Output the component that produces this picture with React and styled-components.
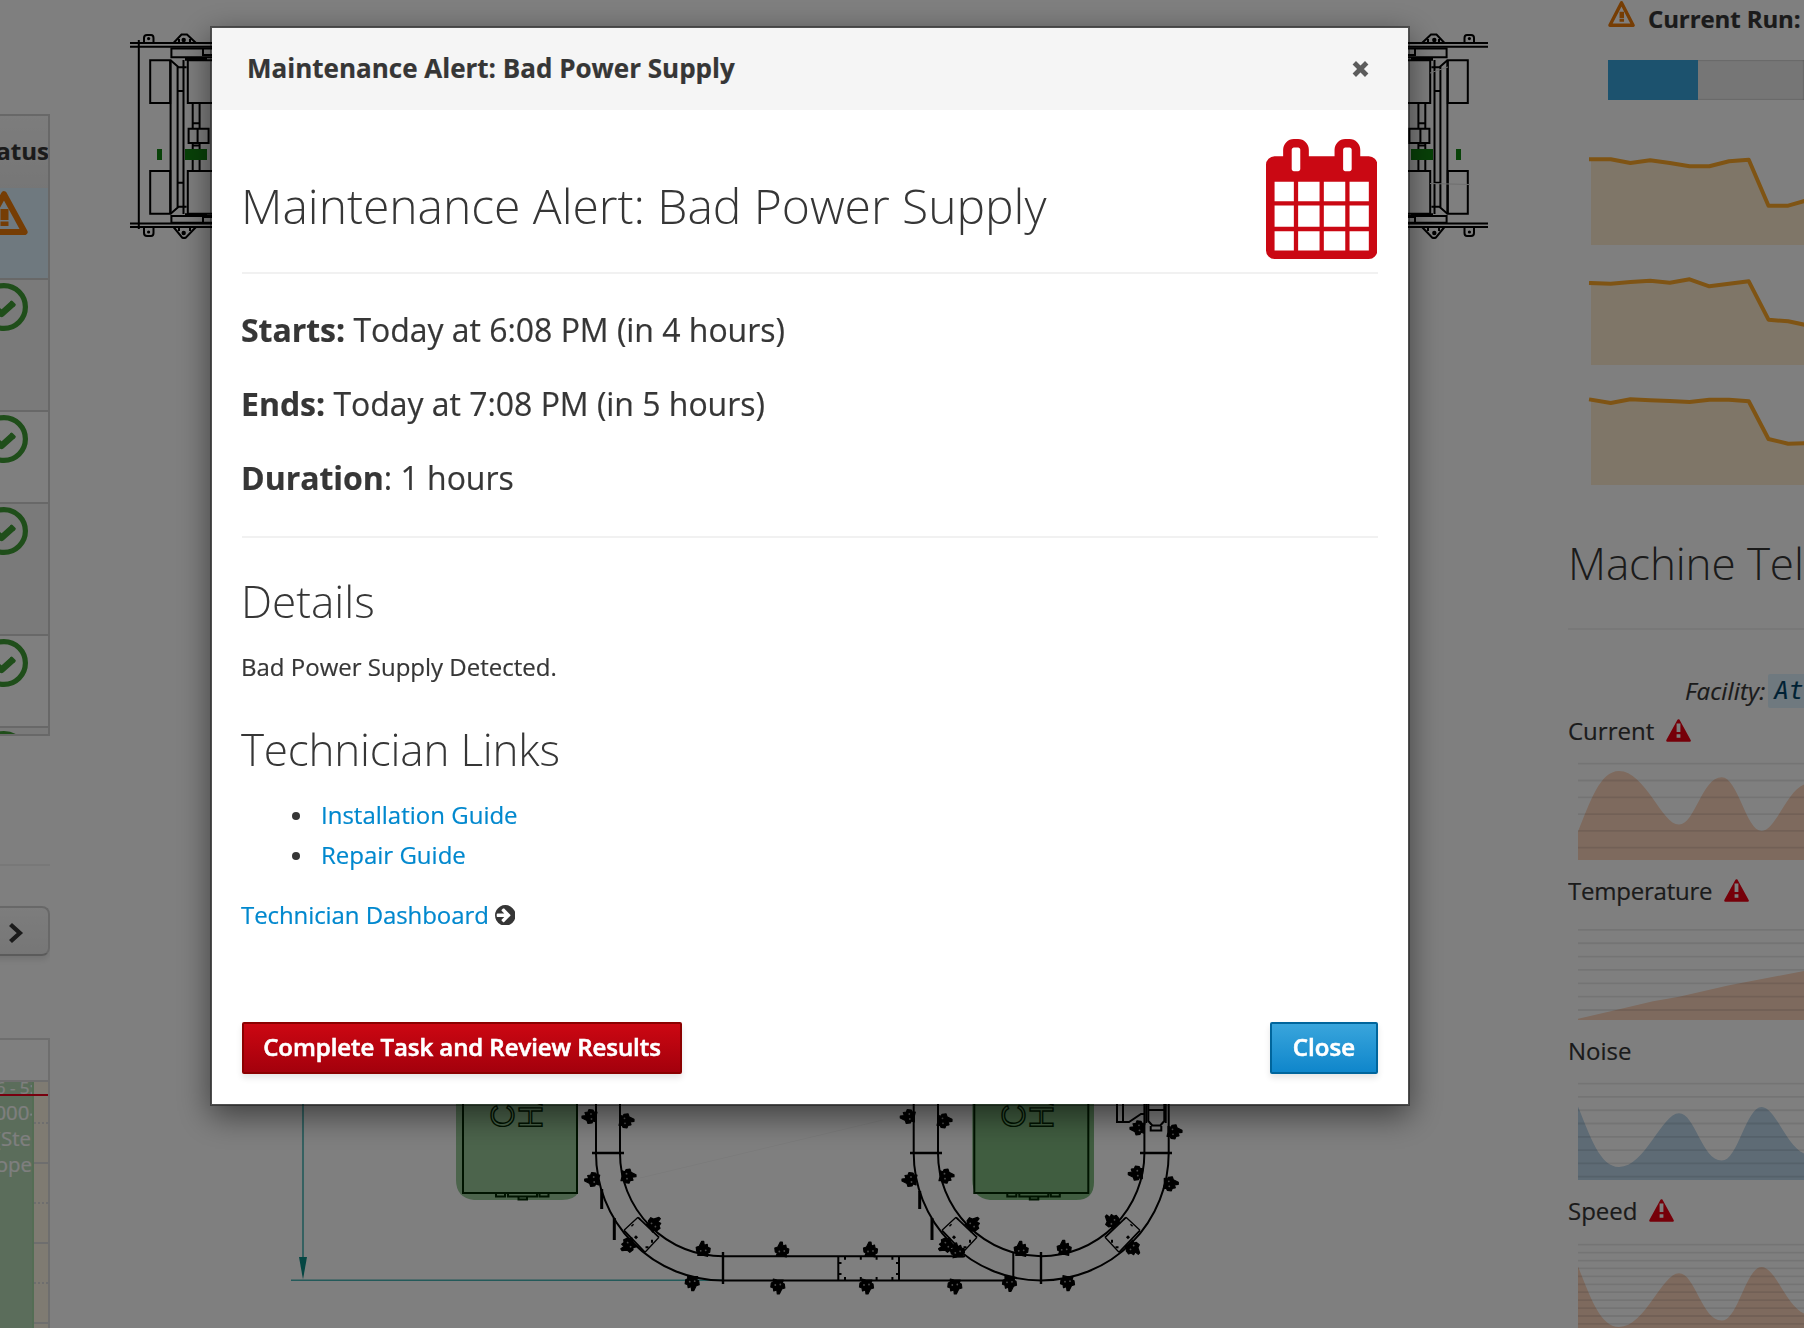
import React from "react";
import styled, { createGlobalStyle, css } from "styled-components";

const Global = createGlobalStyle`
  * { box-sizing: border-box; }
  html, body { margin: 0; height: 100%; overflow: hidden; background: #fff; }
  body {
    font-family: "Open Sans", "Noto Sans", sans-serif;
    font-size: 24px;
    line-height: 40px;
    color: #363636;
    -webkit-text-stroke: 0.2px;
  }
`;

/* ---------- page shell ---------- */

const Page = styled.main`
  display: grid;
  grid-template-columns: 50px minmax(0, 1fr) 236px;
  width: 100vw;
  height: 100vh;
  overflow: hidden;
`;

const LeftRail = styled.aside`
  display: flex;
  flex-direction: column;
  overflow: hidden;
  padding-top: 114px;
`;

const RightRail = styled.aside`
  overflow: hidden;
  white-space: nowrap;
`;

const FloorPlan = styled.section`
  overflow: hidden;
  svg { display: block; }
`;

/* ---------- left rail ---------- */

const StatusTable = styled.div`
  height: 622px;
  overflow: hidden;
  border: solid #d1d1d1;
  border-width: 2px 2px 2px 0;
`;

const StatusHead = styled.div`
  display: flex;
  justify-content: flex-end;
  height: 72px;
  padding-top: 15px;
  background: linear-gradient(#fafafa, #ededed);
  font-weight: 700;
  span { margin-right: -1px; }
`;

const StatusRow = styled.div`
  display: flex;
  justify-content: flex-end;
  height: ${(p) => p.$height}px;
  padding: 3px 20px 0 0;
  border-bottom: 2px solid #d1d1d1;
  background: ${(p) => (p.$tone === "selected" ? "#def3ff" : p.$tone === "odd" ? "#f5f5f5" : "#fff")};
  svg { flex: none; }
`;

const Rule = styled.hr`
  width: 100%;
  height: 2px;
  margin: ${(p) => p.$margin || "0"};
  border: 0;
  background: #f1f1f1;
`;

const PagerButton = styled.button`
  display: flex;
  flex: none;
  align-items: center;
  justify-content: flex-end;
  width: 90px;
  height: 50px;
  margin: 40px 0 0 -40px;
  padding: 3px 24px 0 0;
  border: 2px solid #d1d1d1;
  border-bottom-color: #b7b7b7;
  border-radius: 8px;
  background: linear-gradient(#fafafa, #ededed);
  box-shadow: 0 4px 6px rgba(3, 3, 3, 0.1);
`;

const Schedule = styled.div`
  flex: 1;
  margin-top: 82px;
  border: solid #ddd;
  border-width: 2px 2px 0 0;
  overflow: hidden;
`;

const ScheduleHead = styled.div`
  height: 42px;
  border-bottom: 2px solid #ddd;
`;

const ScheduleBody = styled.div`
  position: relative;
  height: 260px;
  display: flex;
`;

const ScheduleEvent = styled.div`
  width: 34px;
  overflow: hidden;
  border-right: 2px solid #a8dba8;
  background: #b6dbb6;
  color: #fff;
  font-size: 20.4px;
  line-height: 26px;
  white-space: nowrap;
`;

const EventLine = styled.div`
  display: flex;
  justify-content: flex-end;
  width: ${(p) => p.$width || 30}px;
  ${(p) =>
    p.$small &&
    css`
      height: 17px;
      font-size: 17px;
      line-height: 12px;
    `}
`;

const SlotColumn = styled.div`
  flex: 1;
  background: #fff6e4;
`;

const Slot = styled.div`
  height: 40px;
  border-bottom: 2px ${(p) => (p.$minor ? "dotted" : "solid")} #ddd;
  &:first-child { height: 42px; }
`;

const NowLine = styled.div`
  position: absolute;
  top: 12px;
  left: 0;
  right: 0;
  height: 2px;
  background: #f0001c;
`;

/* ---------- right rail ---------- */

const RunHeading = styled.div`
  display: flex;
  align-items: flex-start;
  gap: 13px;
  height: 60px;
  padding: 0 0 0 40px;
  font-weight: 700;
  line-height: 37px;
  letter-spacing: -0.1px;
  svg { flex: none; margin-top: 1px; }
`;

const Progress = styled.div`
  height: 40px;
  margin-left: 40px;
  background: #ededed;
  box-shadow: inset 0 0 2px rgba(0, 0, 0, 0.4);
`;

const ProgressFill = styled.div`
  width: 90px;
  height: 100%;
  background: #39a5dc;
`;

const Sparklines = styled.div`
  display: flex;
  flex-direction: column;
  margin: 25px 0 0 18px;
  svg { display: block; }
`;

const SectionTitle = styled.h2`
  margin: 48px 0 35px;
  font-size: 44px;
  font-weight: 300;
  line-height: 60px;
  letter-spacing: -0.1px;
  -webkit-text-stroke: 0;
`;

const Facility = styled.div`
  display: flex;
  align-items: flex-start;
  gap: 3px;
  height: 40px;
  padding-left: 117px;
  font-style: italic;
  line-height: 34px;
  letter-spacing: 0.15px;
`;

const FacilityCode = styled.code`
  flex: none;
  height: 34px;
  width: 120px;
  padding-left: 6px;
  border-radius: 2px;
  background: #def3ff;
  color: #004368;
  font: italic 24px/34px "DejaVu Sans Mono", monospace;
`;

const Metric = styled.div`
  height: 160px;
`;

const MetricLabel = styled.div`
  display: flex;
  align-items: flex-start;
  gap: 12px;
  height: 34px;
  line-height: 34px;
  letter-spacing: ${(p) => p.$tracking || 0}px;
  svg { margin-top: 5px; }
`;

const MetricChart = styled.svg`
  display: block;
  margin-left: 10px;
`;

/* ---------- modal ---------- */

const Backdrop = styled.div`
  position: fixed;
  inset: 0;
  display: flex;
  align-items: flex-start;
  padding: 26px 0 0 210px;
  background: rgba(0, 0, 0, 0.5);
`;

const Dialog = styled.div`
  display: flex;
  flex-direction: column;
  width: 1200px;
  height: 1080px;
  border: 2px solid rgba(0, 0, 0, 0.38);
  background: #fff;
  background-clip: padding-box;
  box-shadow: 0 10px 30px rgba(0, 0, 0, 0.5);
`;

const DialogHeader = styled.header`
  display: flex;
  align-items: center;
  justify-content: space-between;
  height: 82px;
  padding: 0 39px 0 35px;
  background: #f5f5f5;
`;

const DialogTitle = styled.h4`
  margin: -2px 0 0;
  font-size: 26px;
  font-weight: 700;
`;

const DialogBody = styled.div`
  display: flex;
  flex: 1;
  flex-direction: column;
  padding: 28px 30px 30px;
`;

/* Copy hangs one pixel outside the rules so the glyph edges line up with them. */
const hang = css`
  margin-left: -1px;
`;

const TitleRow = styled.div`
  display: flex;
  align-items: flex-start;
  justify-content: space-between;
  height: 134px;
  padding-right: 1px;
  svg { margin-top: 1px; }
`;

const Heading = styled.h1`
  margin: ${(p) => p.$margin};
  font-size: ${(p) => p.$size}px;
  font-weight: 300;
  line-height: 60px;
  letter-spacing: ${(p) => p.$tracking || 0}px;
  -webkit-text-stroke: 0;
  ${hang}
`;

const Facts = styled.div`
  display: flex;
  flex-direction: column;
  gap: 30px;
  margin: 34px 0 36px;
  font-size: 32px;
  line-height: 44px;
  letter-spacing: -0.03px;
  ${hang}
`;

const Fact = styled.p`
  margin: 0;
  b { font-weight: 700; }
`;

const Paragraph = styled.p`
  display: flex;
  align-items: center;
  gap: 6px;
  margin: ${(p) => p.$margin};
  letter-spacing: ${(p) => p.$tracking || 0}px;
  ${hang}
`;

const LinkList = styled.ul`
  margin: 0;
  padding: 0 0 0 50px;
  list-style: none;
`;

const LinkItem = styled.li`
  display: flex;
  align-items: center;
  gap: 21px;
  &::before {
    content: "";
    width: 8px;
    height: 8px;
    margin-top: 1px;
    border-radius: 50%;
    background: #363636;
  }
`;

const Link = styled.a`
  color: #0088ce;
  text-decoration: none;
`;

const Actions = styled.div`
  display: flex;
  justify-content: space-between;
  margin-top: auto;
`;

const Button = styled.button`
  width: ${(p) => p.$width}px;
  height: 52px;
  padding: 0 0 2px;
  border: 2px solid ${(p) => (p.$danger ? "#8b0000" : "#00659c")};
  border-radius: 2px;
  background: ${(p) => (p.$danger ? "linear-gradient(#cc0712, #a3000c)" : "linear-gradient(#39a5dc, #0f86cb)")};
  box-shadow: 0 4px 6px rgba(3, 3, 3, 0.1);
  color: #fff;
  font: 600 24px/40px "Open Sans", sans-serif;
  letter-spacing: ${(p) => (p.$danger ? -0.06 : 0.1)}px;
  -webkit-text-stroke: 0.6px #fff;
  white-space: nowrap;
`;

/* ---------- icons ---------- */

const OkIcon = () => (
  <svg width="48" height="48" viewBox="0 0 48 48" fill="none" stroke="#3f9c35">
    <circle cx="24" cy="24" r="21.4" strokeWidth="5.2" />
    <path d="M14.5 24.500l7 6.300L33 20.500" strokeWidth="6.600" strokeLinejoin="round" />
    <path d="M31.500 19.200l2.800 2.600" strokeWidth="3" strokeLinecap="round" />
  </svg>
);

const WarningIcon = ({ width, height }) => (
  <svg width={width} height={height} viewBox="0 0 48 44" preserveAspectRatio="none">
    <path d="M24 3.2L44.6 41H3.4z" fill="none" stroke="#ec7a08" strokeWidth="6" strokeLinejoin="round" />
    <path d="M20.500 18h8v11h-8zM20.500 30.500h8v4.500h-8z" fill="#ec7a08" />
  </svg>
);

const ErrorIcon = () => (
  <svg width="25" height="23" viewBox="0 0 25 23">
    <path d="M12.5 1.4L23.6 21.6H1.4z" fill="#ec0013" stroke="#ec0013" strokeWidth="2.4" strokeLinejoin="round" />
    <path d="M10.6 4.6h3.8v8.4h-3.8zM10.6 15.2h3.8v3.6h-3.8z" fill="#fff" />
  </svg>
);

const ChevronIcon = () => (
  <svg width="16" height="22" viewBox="0 0 16 22">
    <path d="M2.5 2.5L11.8 11l-9.3 8.5" fill="none" stroke="#363636" strokeWidth="4.4" />
  </svg>
);

const CloseIcon = () => (
  <svg width="17" height="17" viewBox="0 0 17 17">
    <path d="M2.3 1.8l12.4 12.4M14.7 1.8L2.3 14.2" stroke="#5c5c5c" strokeWidth="4.8" />
  </svg>
);

const CalendarIcon = () => (
  <svg width="111.4" height="120" viewBox="0 0 1664 1792">
    <path
      fill="#ca0813"
      d="M128 1664h288v-288h-288v288zm352 0h320v-288h-320v288zm-352-352h288v-320h-288v320zm352 0h320v-320h-320v320zm-352-384h288v-288h-288v288zm736 736h320v-288h-320v288zm-384-736h320v-288h-320v288zm768 736h288v-288h-288v288zm-384-352h320v-320h-320v320zm-352-864v-288q0-13-9.5-22.5t-22.5-9.5h-64q-13 0-22.5 9.5t-9.5 22.5v288q0 13 9.5 22.5t22.5 9.5h64q13 0 22.5-9.5t9.5-22.5zm736 864h288v-320h-288v320zm-384-384h320v-288h-320v288zm384 0h288v-288h-288v288zm32-480v-288q0-13-9.5-22.5t-22.5-9.5h-64q-13 0-22.5 9.5t-9.5 22.5v288q0 13 9.5 22.5t22.5 9.5h64q13 0 22.5-9.5t9.5-22.5zm384-64v1280q0 52-38 90t-90 38h-1408q-52 0-90-38t-38-90v-1280q0-52 38-90t90-38h128v-96q0-66 47-113t113-47h64q66 0 113 47t47 113v96h384v-96q0-66 47-113t113-47h64q66 0 113 47t47 113v96h128q52 0 90 38t38 90z"
    />
  </svg>
);

const ArrowCircleIcon = () => (
  <svg width="20.6" height="20.6" viewBox="128 128 1536 1536">
    <path
      fill="#363636"
      d="M1285 896q0-27-18-45l-91-91-362-362q-18-18-45-18t-45 18l-91 91q-18 18-18 45t18 45l189 189h-502q-26 0-45 19t-19 45v128q0 26 19 45t45 19h502l-189 189q-19 19-19 45t19 45l91 91q18 18 45 18t45-18l362-362 91-91q18-18 18-45zm379 0q0 209-103 385.5t-279.5 279.5-385.5 103-385.5-103-279.5-279.5-103-385.5 103-385.5 279.5-279.5 385.5-103 385.5 103 279.5 279.5 103 385.5z"
    />
  </svg>
);

/* ---------- charts ---------- */

const SPARKS = [
  [34.3, 34.3, 38, 35.3, 38, 41.3, 41.3, 36.3, 34.7, 80.7, 80.7, 75],
  [38, 38.7, 37, 35.7, 37.7, 34.3, 41.3, 38.7, 36.3, 74.7, 76.3, 80.5],
  [34.7, 38, 34.3, 35.3, 36, 37, 34.7, 34.7, 36.3, 74, 78.7, 78],
];

const Sparkline = ({ values }) => {
  const line = values.map((v, i) => `${5 + i * 19.72},${v}`).join(" L");
  return (
    <svg width="218" height="120" viewBox="0 0 218 120">
      <path d={`M${line} V120 H5 Z`} fill="#feecd1" />
      <path d={`M${line}`} fill="none" stroke="#ffa928" strokeWidth="4" strokeLinecap="square" strokeLinejoin="round" />
    </svg>
  );
};

const WAVE = [
  [0, 83.4], [12, 54], [22, 22.9], [41, 22.9],
  [67, 22.9], [84, 76.6], [101, 76.6],
  [117, 76.6], [124, 29.3], [143.7, 29.3],
  [160, 29.3], [168, 83], [183.7, 83],
  [197, 83], [209, 43], [226, 36.5],
];

const wavePath = (flip) => {
  const p = WAVE.map(([x, y]) => `${x},${flip ? (121.9 - y).toFixed(1) : y}`);
  return `M${p[0]} C${p.slice(1).join(" ")} V112 H0 Z`;
};

const steps = (from, gap, count) => Array.from({ length: count }, (_, i) => from + gap * i);

const METRICS = [
  { name: "Current", alert: true, fill: "#fcd5bd", grid: steps(15.7, 16.8, 6), path: wavePath(false) },
  { name: "Temperature", alert: true, tracking: -0.22, fill: "#fcd5bd", grid: steps(21.9, 13.35, 7), path: "M0 110.8L38 102 75 93.2 101 88.8 150 77.5 226 63V112H0Z" },
  { name: "Noise", alert: false, fill: "#bcd6ea", grid: steps(15.7, 13.27, 8), path: wavePath(true) },
  { name: "Speed", alert: true, fill: "#fcd5bd", grid: steps(16.7, 7.92, 12), path: wavePath(true) },
];

/* ---------- floor plan ---------- */

const MachineEnd = () => (
  <g fill="none" stroke="#000" strokeWidth="2">
    <path d="M130 43H240M130 46.700H240M130 223.500H240M130 227H240" />
    <path d="M144 43v-5q0-3 3-3h4q2.500 0 2.500 3v5M144 227v6q0 3 3 3h4q2.500 0 2.500-3v-6" />
    <path d="M173.500 43l8-8.500h5.500l9 8.500M179 43v-4M190 43v-4M173.500 227l8.500 10.500q2 1 4 0l10-10.500M179 227v4M190 227v4" />
    <path d="M171.400 48.500H240V57.300H171.400zM203 49v6h10M171.400 216H240V222.700H171.400zM203 222v-5h10" />
    <path d="M185 59h22M185 215h22" strokeWidth="3.400" />
    <path d="M150.200 60.300h20v42.700h-20zM187.800 60.300h40v42.700h-40zM150.200 171h20v42.700h-20zM187.800 171h40v42.700h-40z" />
    <path d="M170.600 60v154M177.600 67v140M183.500 60v154" />
    <path d="M170.600 60.300l8 7h8M177.600 91h6M177.600 182.700h6M170.600 213.700l8-7h8" />
    <path d="M192.700 103v26M199.600 103v26M192.700 143v28M199.600 143v28M192.700 123.300h7M192.700 145.500h7M188.600 128.700h20v14.300h-20zM197.600 128.700v14.300" />
    <g fill="#000" stroke="none">
      <circle cx="148.600" cy="38.600" r="1.600" />
      <circle cx="183.700" cy="40" r="2.200" />
      <circle cx="148.600" cy="232" r="1.600" />
      <circle cx="183.700" cy="233" r="2.200" />
    </g>
    <path d="M157 149h5v11h-5zM185 149h22v11h-22z" fill="#108410" stroke="none" />
  </g>
);

const Cabinet = ({ x, y = 0 }) => (
  <g transform={`translate(${x} ${y})`} fill="none" stroke="#002800" strokeWidth="2">
    <path d="M0 1080V1193H114V1080" />
    <path d="M33 1193v3.500h9V1193M45 1193v3.500h29V1193M76.500 1193v3.500h9V1193M55.500 1196.500v3h8.500v-3" />
  </g>
);

const CabinetText = styled.text`
  font: 33px "Liberation Sans", sans-serif;
  fill: none;
  stroke: #002800;
  stroke-width: 1.4px;
`;

/* x, y, direction the knob points to in degrees */
const CLAMPS = [
  [590, 1117, 180], [626, 1120.3, 0], [592.7, 1180, 180], [628, 1175.7, 0],
  [654, 1223.7, -45], [628.3, 1245.7, 150], [702.7, 1249.3, -90], [692.7, 1282.7, 90],
  [781.3, 1250, -90], [870, 1250, -90], [778.3, 1286, 90], [867, 1286, 90], [955.3, 1286, 90],
  [1010, 1283.3, 90], [957, 1251, -100], [946, 1245.7, 150], [972.7, 1223.7, -45],
  [1020.7, 1249.3, -90], [1063.7, 1248.3, -90], [1068, 1282.7, 90],
  [1133.3, 1248, 45], [1111.7, 1221.3, -135], [1170.3, 1183.3, 0], [1136.3, 1173.7, 180],
  [1174, 1131.3, 0], [1138, 1128.3, 180], [946, 1175.7, 0], [910, 1180, 180],
  [944, 1120.3, 0], [908.3, 1117, 180],
];

const Clamp = ({ x, y, turn }) => (
  <g transform={`translate(${x} ${y}) rotate(${turn})`}>
    <path
      d="M-6-5l3 1 1-2 4-.5 1 3 5 2.500 0 2-4 .5 1 3-3 .5-1 2.500-4-.5-1-2-3 0 1-4z"
      stroke="#000"
      strokeWidth="1.200"
      strokeLinejoin="round"
    />
    <circle cx="-1.500" cy="-2" r="0.900" fill="#999" />
    <circle cx="-1" cy="3" r="0.900" fill="#999" />
  </g>
);

const CornerPlate = () => (
  <g fill="none" stroke="#000">
    <path d="M0-18L-14-5M21 2L7 17" strokeWidth="1.300" />
    <path d="M0-18L21 2M-14-5L7 17" strokeWidth="1.800" />
    <path d="M-6-10.500l1 1M1-16l1-1M15 6l-2 0M9 11l0 2M-3 3l2-2" strokeWidth="3" />
  </g>
);

const Plan = () => (
  <svg width="1518" height="1328" viewBox="50 0 1518 1328">
    <MachineEnd />
    <path d="M138.800 40V229" stroke="#000" strokeWidth="2" />
    <g transform="translate(1618 0) scale(-1 1)"><MachineEnd /></g>
    <path d="M1430 73l18-6M1430 183.500l40 1" stroke="#ddd" strokeWidth="1" />

    <path d="M303 1090V1260M291 1280.300H723" stroke="#46b4b4" fill="none" strokeWidth="1.600" />
    <path d="M299 1257h8l-4 22.500z" fill="#0a8c86" />
    <path d="M640 1178L883 1120" stroke="#f6f6f6" />

    <path d="M456 1080H578V1193Q574 1200 562 1200H474Q456 1198 456 1180Z" fill="#98c898" />
    <path d="M972.300 1080H1094V1182Q1094 1200 1076 1200H990Q972.300 1198 972.300 1180Z" fill="#80ba80" />
    <Cabinet x={463} />
    <Cabinet x={974.3} />
    <CabinetText transform="translate(514 1128) rotate(-90)">CNC</CabinetText>
    <CabinetText transform="translate(542 1129) rotate(-90)">HAAS</CabinetText>
    <CabinetText transform="translate(1025 1128) rotate(-90)">CNC</CabinetText>
    <CabinetText transform="translate(1053 1129) rotate(-90)">HAAS</CabinetText>

    <g fill="none" stroke="#000" strokeWidth="2">
      <path d="M596 1080V1153A127.300 127.300 0 0 0 723 1280.500H1014" />
      <path d="M620 1080V1153A103 103 0 0 0 723 1256.300H965" />
      <path d="M913.700 1080V1153A127.500 127.500 0 0 0 1168.700 1153V1080" />
      <path d="M938 1080V1153A103.200 103.200 0 0 0 1144.400 1153V1080" />
      <path d="M1013.300 1253v28M838.300 1257v23M899 1257v23" />
      <path d="M844 1258.300h55M844 1278.500h55" strokeDasharray="2 13.800" strokeWidth="3" />
      <path d="M840 1262v2M840 1273v2M897.500 1262v2M897.500 1273v2" strokeWidth="3" />
      <path d="M592 1153h32M910 1153h32M1140 1153h32M723 1252v32M1041 1252v32" strokeWidth="2.400" />
      <path d="M601.700 1189v20M614.300 1218v22M919.700 1191v18M932 1218v22" strokeWidth="3" />
      <path d="M1117 1090v32h12l12-8h3M1123 1090v31M1146.300 1090v33M1165.700 1090v33" />
      <path d="M1148.300 1090v31l4 4.500h8l4-4.500v-31M1148.300 1110h16M1150.700 1126v4.500h10.600v-4.500" />
    </g>
    <g transform="translate(638 1235.300)"><CornerPlate /></g>
    <g transform="translate(956 1235.300)"><CornerPlate /></g>
    <g transform="translate(1126 1235.300) scale(-1 1)"><CornerPlate /></g>
    {CLAMPS.map(([x, y, turn]) => <Clamp key={`${x}-${y}`} x={x} y={y} turn={turn} />)}
  </svg>
);

/* ---------- app ---------- */

const ROWS = [
  { height: 92, tone: "selected" },
  { height: 132, tone: "odd" },
  { height: 92 },
  { height: 132, tone: "odd" },
  { height: 92 },
  { height: 132, tone: "odd" },
];

export default function App() {
  return (
    <>
      <Global />
      <Page>
        <LeftRail>
          <StatusTable>
            <StatusHead><span>Status</span></StatusHead>
            {ROWS.map((row, i) => (
              <StatusRow key={i} $height={row.height} $tone={row.tone}>
                {row.tone === "selected" ? <WarningIcon width={48} height={44} /> : <OkIcon />}
              </StatusRow>
            ))}
          </StatusTable>
          <Rule $margin="128px 0 0" />
          <PagerButton aria-label="Next"><ChevronIcon /></PagerButton>
          <Schedule>
            <ScheduleHead />
            <ScheduleBody>
              <ScheduleEvent>
                <EventLine $small $width={34}>5:46 - 5:</EventLine>
                <EventLine $width={36}>000-</EventLine>
                <EventLine $width={31}>(Ste</EventLine>
                <EventLine $width={32}>ope</EventLine>
              </ScheduleEvent>
              <SlotColumn>
                {steps(0, 1, 7).map((i) => <Slot key={i} $minor={i % 2 === 0} />)}
              </SlotColumn>
              <NowLine />
            </ScheduleBody>
          </Schedule>
        </LeftRail>

        <FloorPlan><Plan /></FloorPlan>

        <RightRail>
          <RunHeading><WarningIcon width={27} height={26} />Current Run:</RunHeading>
          <Progress><ProgressFill /></Progress>
          <Sparklines>
            {SPARKS.map((values, i) => <Sparkline key={i} values={values} />)}
          </Sparklines>
          <SectionTitle>Machine Telemetry</SectionTitle>
          <Rule $margin="0 0 44px" />
          <Facility>Facility:<FacilityCode>Atlanta</FacilityCode></Facility>
          {METRICS.map((m) => (
            <Metric key={m.name}>
              <MetricLabel $tracking={m.tracking}>{m.name}{m.alert && <ErrorIcon />}</MetricLabel>
              <MetricChart width="226" height="112" viewBox="0 0 226 112">
                <path d={m.path} fill={m.fill} />
                {m.grid.map((y) => <path key={y} d={`M0 ${y}H226`} stroke="#000" strokeOpacity="0.09" strokeWidth="1.8" />)}
              </MetricChart>
            </Metric>
          ))}
        </RightRail>
      </Page>

      <Backdrop>
        <Dialog role="dialog">
          <DialogHeader>
            <DialogTitle>Maintenance Alert: Bad Power Supply</DialogTitle>
            <CloseIcon />
          </DialogHeader>
          <DialogBody>
            <TitleRow>
              <Heading $size={48} $tracking={-0.03} $margin="38px 0 0">Maintenance Alert: Bad Power Supply</Heading>
              <CalendarIcon />
            </TitleRow>
            <Rule />
            <Facts>
              <Fact><b>Starts:</b> Today at 6:08 PM (in 4 hours)</Fact>
              <Fact><b>Ends:</b> Today at 7:08 PM (in 5 hours)</Fact>
              <Fact><b>Duration</b>: 1 hours</Fact>
            </Facts>
            <Rule />
            <Heading as="h2" $size={44} $margin="33px 0 16px">Details</Heading>
            <Paragraph $margin="0">Bad Power Supply Detected.</Paragraph>
            <Heading as="h2" $size={44} $tracking={-0.2} $margin="32px 0 16px">Technician Links</Heading>
            <LinkList>
              <LinkItem><Link>Installation Guide</Link></LinkItem>
              <LinkItem><Link>Repair Guide</Link></LinkItem>
            </LinkList>
            <Paragraph $tracking={-0.08} $margin="20px 0 0"><Link>Technician Dashboard</Link><ArrowCircleIcon /></Paragraph>
            <Actions>
              <Button $danger $width={440}>Complete Task and Review Results</Button>
              <Button $width={108}>Close</Button>
            </Actions>
          </DialogBody>
        </Dialog>
      </Backdrop>
    </>
  );
}
